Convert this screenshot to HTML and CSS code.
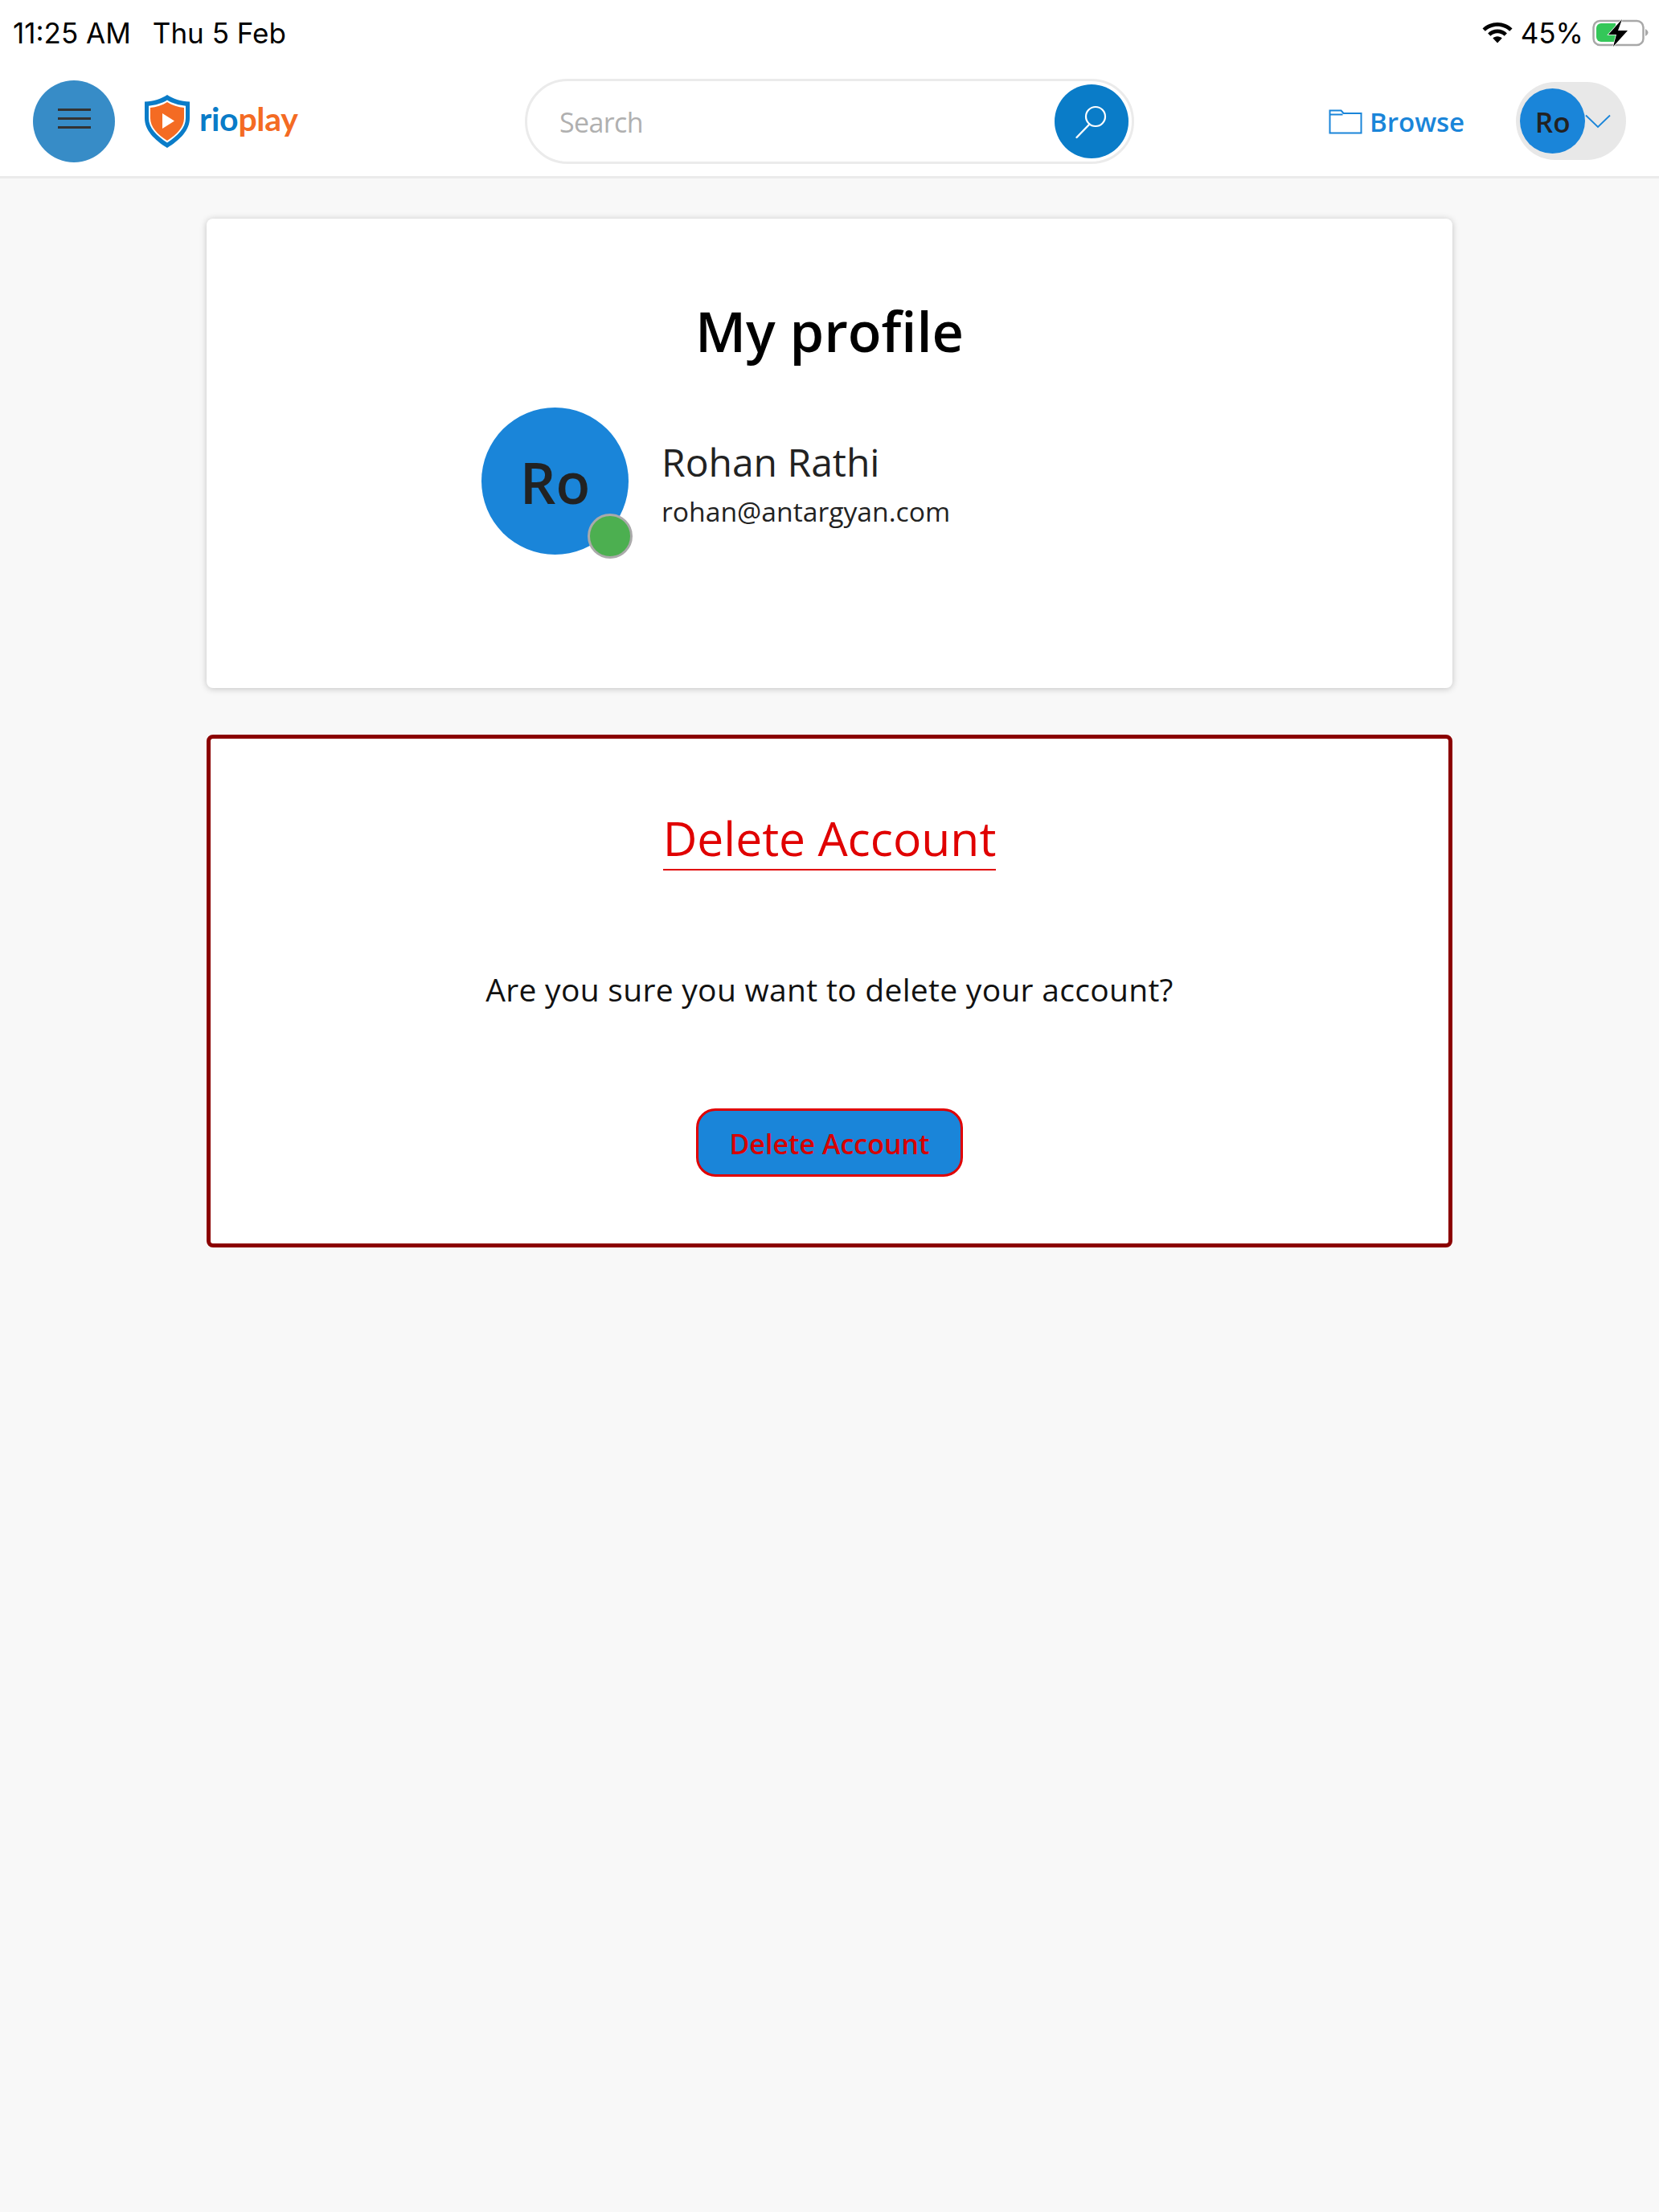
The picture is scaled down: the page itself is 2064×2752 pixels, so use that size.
FILE: index.html
```html
<!DOCTYPE html>
<html lang="en">
<head>
    <meta charset="UTF-8">
    <title>My profile</title>
    <link rel="stylesheet" href="styles.css">
</head>
<body>

    <!-- Status bar -->
    <div class="status-bar">
        <div class="status-time">
            <span class="clock">11:25 AM</span>
            <span class="date">Thu 5 Feb</span>
        </div>
        <div class="status-right">
            <svg class="wifi" width="38" height="26" viewBox="0 0 38 26">
                <path d="M19 0C11.800 0 5.300 2.800.5 7.400l3.300 3.400C7.700 7 13.100 4.700 19 4.700s11.300 2.300 15.200 6.100l3.300-3.400C32.700 2.800 26.200 0 19 0z" fill="#000"/>
                <path d="M19 8.600c-4.600 0-8.800 1.800-11.900 4.800l3.300 3.400c2.200-2.200 5.300-3.500 8.600-3.500s6.400 1.300 8.600 3.500l3.300-3.400C27.800 10.400 23.600 8.600 19 8.600z" fill="#000"/>
                <path d="M19 17.300c-2.200 0-4.200.9-5.700 2.300L19 25.500l5.700-5.900c-1.500-1.400-3.500-2.300-5.700-2.300z" fill="#000"/>
            </svg>
            <span class="battery-text">45%</span>
            <svg class="battery" width="70" height="34" viewBox="0 0 70 34">
                <rect x="1.500" y="2" width="62" height="30" rx="8" fill="none" stroke="#a8a8a8" stroke-width="2.500"/>
                <path d="M11 5h18v23H11a6 6 0 0 1-6-6V11a6 6 0 0 1 6-6z" fill="#34c759"/>
                <path d="M66 12c2 1 3.500 2.800 3.500 4.500S68 20 66 21z" fill="#a8a8a8"/>
                <path d="M37 0 20 19h10l-4 15 18-20H32z" fill="#000" stroke="#fff" stroke-width="1.500" paint-order="stroke"/>
            </svg>
        </div>
    </div>

    <!-- Header -->
    <div class="header">
        <button class="menu-btn">
            <span class="bar"></span>
            <span class="bar"></span>
            <span class="bar"></span>
        </button>

        <div class="logo">
            <svg width="60" height="68" viewBox="0 0 60 68">
                <path d="M30 1 C23 6 13 9 2 9.500 V30 C2 45 14 57 30 67 C46 57 58 45 58 30 V9.500 C47 9 37 6 30 1z" fill="#0a7cc8"/>
                <path d="M30 7.500 C24 11.500 15 14 7 14.700 V30 C7 42 17 52 30 60.500 C43 52 53 42 53 30 V14.700 C45 14 36 11.500 30 7.500z" fill="#fff"/>
                <path d="M30 10 C24 14 16 16.200 9 17 V30 C9 41 18 50.500 30 58 C42 50.500 51 41 51 30 V17 C44 16.200 36 14 30 10z" fill="#f46b23"/>
                <path d="M24 24 L39 33.500 L24 43z" fill="#fff"/>
            </svg>
            <span class="logo-text"><span class="rio">rio</span><span class="play">play</span></span>
        </div>

        <div class="search">
            <span class="search-text">Search</span>
            <button class="search-btn">
                <svg width="44" height="44" viewBox="0 0 44 44">
                    <circle cx="27" cy="16" r="12" fill="none" stroke="#fff" stroke-width="2.200"/>
                    <path d="M19.500 25.500 L3.500 42" fill="none" stroke="#fff" stroke-width="2.400" stroke-linecap="round"/>
                </svg>
            </button>
        </div>

        <a class="browse">
            <svg width="42" height="32" viewBox="0 0 42 32">
                <path d="M1.500 30.500V2.500h14l3 3.500h22v24.500z" fill="none" stroke="#1a85d9" stroke-width="2"/>
                <path d="M1.500 7.500h16" fill="none" stroke="#1a85d9" stroke-width="2"/>
            </svg>
            <span class="browse-text">Browse</span>
        </a>

        <div class="user-pill">
            <div class="user-avatar">Ro</div>
            <svg width="32" height="18" viewBox="0 0 32 18">
                <path d="M1 1.500 L16 16 L31 1.500" fill="none" stroke="#1a85d9" stroke-width="1.800"/>
            </svg>
        </div>
    </div>

    <!-- Page content -->
    <div class="content">
        <div class="card profile-card">
            <h2>My profile</h2>
            <div class="profile-row">
                <div class="avatar">
                    Ro
                    <span class="online-dot"></span>
                </div>
                <div class="profile-info">
                    <p class="profile-name">Rohan Rathi</p>
                    <p class="profile-email">rohan@antargyan.com</p>
                </div>
            </div>
        </div>

        <div class="card delete-card">
            <h2 class="delete-title">Delete Account</h2>
            <p class="delete-text">Are you sure you want to delete your account?</p>
            <button class="delete-btn">Delete Account</button>
        </div>
    </div>

</body>
</html>
```

FILE: styles.css
```css
* {
    margin: 0;
    padding: 0;
    box-sizing: border-box;
}
body {
    font-family: "Open Sans", sans-serif;
    background: #f8f8f8;
    color: #222;
}
button {
    font-family: inherit;
    border: none;
}

/* status bar */
.status-bar {
    height: 82px;
    background: #fff;
    display: flex;
    justify-content: space-between;
    align-items: center;
    padding: 0 13px 0 16px;
    font-family: Inter, sans-serif;
    font-size: 35px;
    color: #000;
}
.status-time {
    display: flex;
    gap: 27px;
}
.status-right {
    display: flex;
    align-items: center;
}
.battery-text {
    margin-left: 10px;
}
.battery {
    margin-left: 11px;
}

/* header */
.header {
    height: 140px;
    background: #fff;
    border-bottom: 3px solid #ebebeb;
    display: flex;
    align-items: center;
    padding-left: 41px;
}
.menu-btn {
    width: 102px;
    height: 102px;
    border-radius: 50%;
    background: #378cc7;
    display: flex;
    flex-direction: column;
    align-items: center;
    justify-content: center;
    gap: 8px;
    padding-bottom: 6px;
}
.bar {
    width: 41px;
    height: 3px;
    background: #333;
}
.logo {
    display: flex;
    align-items: center;
    margin-left: 35px;
    width: 194px;
    gap: 10px;
}
.logo-text {
    font-family: Lato, sans-serif;
    font-size: 41px;
    font-weight: 700;
    line-height: 1;
    letter-spacing: -0.3px;
    margin-bottom: 6px;
}
.rio {
    color: #0a7cc8;
}
.play {
    color: #f46b23;
}
.search {
    width: 758px;
    height: 106px;
    margin-left: 281px;
    border: 3px solid #ebebeb;
    border-radius: 53px;
    background: #fff;
    display: flex;
    align-items: center;
    justify-content: space-between;
    padding: 0 4px 0 40px;
}
.search-text {
    font-size: 34px;
    letter-spacing: -0.6px;
    color: #b0b0b0;
    padding-top: 3px;
}
.search-btn {
    width: 92px;
    height: 92px;
    border-radius: 50%;
    background: #0a7cc8;
    display: flex;
    align-items: center;
    justify-content: center;
}
.browse {
    display: flex;
    align-items: center;
    margin-left: 242px;
    gap: 9px;
    color: #1a85d9;
    font-size: 33px;
    font-weight: 600;
}
.browse-text {
    padding-top: 2px;
}
.user-pill {
    width: 137px;
    height: 97px;
    margin-left: 64px;
    border-radius: 49px;
    background: #e8e8e8;
    display: flex;
    align-items: center;
    padding-left: 5px;
}
.user-avatar {
    width: 81px;
    height: 81px;
    border-radius: 50%;
    background: #1a85d9;
    color: #222;
    font-size: 35px;
    font-weight: 600;
    padding-top: 2px;
    display: flex;
    align-items: center;
    justify-content: center;
}

/* cards */
.content {
    width: 1550px;
    margin: 0 auto;
    padding-top: 50px;
}
.card {
    background: #fff;
    border-radius: 8px;
    text-align: center;
}
.profile-card {
    height: 584px;
    box-shadow: 0 1px 8px rgba(0, 0, 0, 0.22);
    padding-top: 90px;
}
.profile-card h2 {
    font-size: 68.500px;
    font-weight: 600;
    line-height: 100px;
    color: #000;
}
.profile-row {
    display: flex;
    align-items: center;
    margin: 45px 0 0 342px;
    text-align: left;
}
.avatar {
    position: relative;
    width: 183px;
    height: 183px;
    border-radius: 50%;
    background: #1a85d9;
    font-size: 70px;
    font-weight: 600;
    padding-top: 2px;
    display: flex;
    align-items: center;
    justify-content: center;
}
.online-dot {
    position: absolute;
    right: -5px;
    bottom: -5px;
    width: 56px;
    height: 56px;
    border-radius: 50%;
    background: #4caf50;
    border: 3px solid #aaa;
}
.profile-info {
    margin-left: 41px;
    padding-top: 5px;
}
.profile-name {
    font-size: 48px;
    line-height: 64px;
}
.profile-email {
    font-size: 33.700px;
    line-height: 48px;
    margin-top: 5px;
}
.delete-card {
    height: 638px;
    margin-top: 58px;
    border: 5px solid #8b0000;
}
.delete-title {
    display: inline-block;
    margin-top: 85px;
    font-size: 58.800px;
    font-weight: 400;
    line-height: 77px;
    color: #e00000;
    border-bottom: 2px solid #e00000;
}
.delete-text {
    margin-top: 121px;
    font-size: 39px;
    letter-spacing: 0.3px;
    color: #111;
}
.delete-btn {
    display: block;
    width: 332px;
    height: 85px;
    margin: 122px auto 0;
    padding-top: 3px;
    background: #1a85d9;
    border: 3px solid #e00000;
    border-radius: 24px;
    color: #d80000;
    font-size: 34px;
    font-weight: 600;
}
```
